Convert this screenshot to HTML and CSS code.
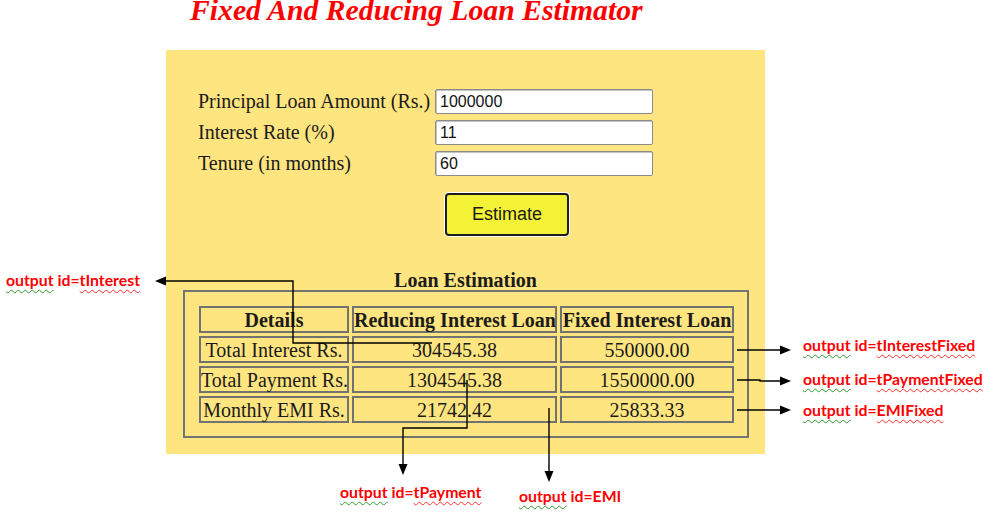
FILE: index.html
```html
<!DOCTYPE html>
<html lang="en">
<head>
<meta charset="utf-8">
<title>Fixed And Reducing Loan Estimator</title>
<link rel="stylesheet" href="styles.css">
</head>
<body>
<header class="top">
  <h1 class="title">Fixed And Reducing Loan Estimator</h1>
</header>
<main class="panel">
  <form class="form">
    <label class="lbl" for="p">Principal Loan Amount (Rs.)</label>
    <input class="inp" id="p" type="text" value="1000000">
    <label class="lbl" for="r">Interest Rate (%)</label>
    <input class="inp" id="r" type="text" value="11">
    <label class="lbl" for="t">Tenure (in months)</label>
    <input class="inp" id="t" type="text" value="60">
  </form>
  <div class="actions"><button class="estimate" type="button">Estimate</button></div>
  <h2 class="est-title">Loan Estimation</h2>
  <fieldset class="results">
    <table class="tbl">
      <colgroup><col class="c1"><col class="c2"><col class="c3"></colgroup>
      <tr><th>Details</th><th>Reducing Interest Loan</th><th>Fixed Interest Loan</th></tr>
      <tr><td class="name">Total Interest Rs.</td><td>304545.38</td><td>550000.00</td></tr>
      <tr><td class="name">Total Payment Rs.</td><td>1304545.38</td><td>1550000.00</td></tr>
      <tr><td class="name">Monthly EMI Rs.</td><td>21742.42</td><td>25833.33</td></tr>
    </table>
  </fieldset>
</main>

<svg class="arrows" width="993" height="513" viewBox="0 0 993 513">
  <g fill="none" stroke="#000" stroke-width="1.4">
    <path d="M165 281 H293 V343 H432"/>
    <path d="M467 380 V428 H403 V466"/>
    <path d="M549 408 V473"/>
    <path d="M737 350 H781"/>
    <path d="M737 380 H760 V381 H781"/>
    <path d="M737 410 H781"/>
  </g>
  <g fill="#000">
    <polygon points="155,281 166,276.5 166,285.5"/>
    <polygon points="403,475 398.5,464 407.5,464"/>
    <polygon points="549,482 544.5,471 553.5,471"/>
    <polygon points="791,350 780,345.5 780,354.5"/>
    <polygon points="791,381 780,376.5 780,385.5"/>
    <polygon points="791,410 780,405.5 780,414.5"/>
  </g>
</svg>
<p class="note n-interest"><span class="g">output</span> id=<span class="r">tInterest</span></p>
<p class="note n-ifixed"><span class="g">output</span> id=<span class="r">tInterestFixed</span></p>
<p class="note n-pfixed"><span class="g">output</span> id=<span class="r">tPaymentFixed</span></p>
<p class="note n-efixed"><span class="g">output</span> id=<span class="r">EMIFixed</span></p>
<p class="note n-payment"><span class="g">output</span> id=<span class="r">tPayment</span></p>
<p class="note n-emi"><span class="g">output</span> id=EMI</p>
</body>
</html>
```
FILE: styles.css
```css
html, body {
  margin: 0;
  padding: 0;
  background: #fff;
}
body {
  position: relative;
  width: 993px;
  height: 513px;
  overflow: hidden;
  font-family: "Liberation Serif", "Times New Roman", serif;
  color: #1b1b1b;
}
.top {
  display: flow-root;
  height: 50px;
  padding-left: 190px;
}
.title {
  margin: -5px 0 0 0;
  font-size: 29.7px;
  line-height: 30px;
  font-style: italic;
  font-weight: bold;
  color: #ff0000;
  white-space: nowrap;
}
.panel {
  margin-left: 166px;
  width: 599px;
  height: 404px;
  box-sizing: border-box;
  background: #ffe57f;
  padding-top: 39px;
}
.form {
  display: grid;
  grid-template-columns: 237px 218px;
  grid-auto-rows: 25px;
  row-gap: 6px;
  padding-left: 32px;
  margin: 0;
}
.lbl {
  font-size: 20px;
  line-height: 25px;
  white-space: nowrap;
}
.inp {
  box-sizing: border-box;
  width: 218px;
  height: 25px;
  margin: 0;
  padding: 0 4px;
  border: 1px solid #8a8a8a;
  border-radius: 2px;
  box-shadow: inset 1px 1px 0 #c4c4c4;
  background: #fff;
  font-family: "Liberation Sans", Arial, sans-serif;
  font-size: 16px;
  color: #111;
}
.actions {
  padding-left: 279px;
  margin-top: 17px;
}
.estimate {
  box-sizing: border-box;
  width: 124px;
  height: 43px;
  margin: 0;
  padding: 0;
  border: 2px solid #1e1e1e;
  border-radius: 4px;
  box-shadow: 0 0 0 1px #fff;
  background: #f4f236;
  font-family: "Liberation Sans", Arial, sans-serif;
  font-size: 18px;
  color: #1a1a1a;
}
.est-title {
  margin: 33px 0 0 0;
  height: 21px;
  font-size: 20px;
  line-height: 22px;
  font-weight: bold;
  text-align: center;
}
.results {
  box-sizing: border-box;
  margin: 0 0 0 17px;
  width: 566px;
  height: 148px;
  padding: 14px 13px 14px 14px;
  border: 2px solid #747474;
  min-width: 0;
}
.tbl {
  border-collapse: separate;
  border-spacing: 3px;
  margin: -3px;
  table-layout: fixed;
  width: 541px;
}
.c1 { width: 150px; }
.c2 { width: 205px; }
.c3 { width: 174px; }
.tbl th, .tbl td {
  box-sizing: border-box;
  height: 27px;
  padding: 0;
  border: 2px solid #727272;
  font-size: 20px;
  line-height: 22px;
  text-align: center;
  white-space: nowrap;
}
.tbl th {
  font-weight: bold;
}
.arrows {
  position: absolute;
  left: 0;
  top: 0;
  pointer-events: none;
}
.note {
  position: absolute;
  margin: 0;
  font-family: Lato, "Open Sans", sans-serif;
  font-weight: bold;
  font-size: 15.8px;
  line-height: 18px;
  color: #ff0000;
  white-space: nowrap;
}
.note .g {
  text-decoration: underline wavy #2e9a2e;
  text-decoration-thickness: 1px;
  text-underline-offset: 3px;
}
.note .r {
  text-decoration: underline wavy #ff3030;
  text-decoration-thickness: 1px;
  text-underline-offset: 3px;
}
.n-interest { left: 6px; top: 271px; }
.n-ifixed { left: 803px; top: 336px; }
.n-pfixed { left: 803px; top: 370px; }
.n-efixed { left: 803px; top: 401px; }
.n-payment { left: 340px; top: 483px; }
.n-emi { left: 519px; top: 487px; }
```
